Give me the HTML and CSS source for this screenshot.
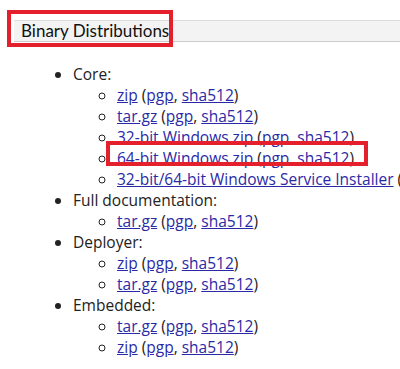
FILE: index.html
```html
<!DOCTYPE html>
<html lang="en">
<head>
    <meta charset="UTF-8">
    <meta name="viewport" content="width=device-width, initial-scale=1.0">
    <title>Binary Distributions</title>
    <link rel="stylesheet" href="styles.css">
</head>
<body>
    <h3 class="section-head"><span class="mark">Binary Distributions</span></h3>
    <ul class="dist">
        <li>Core:
            <ul>
                <li><a href="#">zip</a> (<a href="#">pgp</a>, <a href="#">sha512</a>)</li>
                <li><a href="#">tar.gz</a> (<a href="#">pgp</a>, <a href="#">sha512</a>)</li>
                <li><a href="#">32-bit Windows zip</a> (<a href="#">pgp</a>, <a href="#">sha512</a>)</li>
                <li><span class="mark mark-row"><a href="#">64-bit Windows zip</a> (<a href="#">pgp</a>, <a href="#">sha512</a>)</span></li>
                <li class="nowrap"><a href="#">32-bit/64-bit Windows Service Installer</a> (<a href="#">pgp</a>, <a href="#">sha512</a>)</li>
            </ul>
        </li>
        <li>Full documentation:
            <ul>
                <li><a href="#">tar.gz</a> (<a href="#">pgp</a>, <a href="#">sha512</a>)</li>
            </ul>
        </li>
        <li>Deployer:
            <ul>
                <li><a href="#">zip</a> (<a href="#">pgp</a>, <a href="#">sha512</a>)</li>
                <li><a href="#">tar.gz</a> (<a href="#">pgp</a>, <a href="#">sha512</a>)</li>
            </ul>
        </li>
        <li>Embedded:
            <ul>
                <li><a href="#">tar.gz</a> (<a href="#">pgp</a>, <a href="#">sha512</a>)</li>
                <li><a href="#">zip</a> (<a href="#">pgp</a>, <a href="#">sha512</a>)</li>
            </ul>
        </li>
    </ul>
</body>
</html>
```

FILE: styles.css
```css
* {
    margin: 0;
    padding: 0;
}

html, body {
    overflow: hidden;
}

body {
    font-family: "Open Sans", "Noto Sans", sans-serif;
    font-size: 15.5px;
    color: #222;
    background: #fff;
}

a {
    color: #2a2aa6;
}

.section-head {
    margin: 20px 0 0 14px;
    height: 22px;
    padding-left: 7px;
    background-color: #f3f3f3;
    border-top: 1px solid #ddd;
    border-bottom: 1px solid #ccc;
    box-sizing: border-box;
    font-family: Lato, "Open Sans", sans-serif;
    font-size: 17px;
    font-weight: normal;
    line-height: 20px;
    color: #111;
}

.mark {
    position: relative;
}

.mark::after {
    content: "";
    position: absolute;
    left: -14px;
    top: -10px;
    width: 166px;
    height: 37px;
    border: 4px solid #e3202b;
    box-sizing: border-box;
}

.mark-row::after {
    left: -11px;
    top: -6px;
    width: 262px;
    height: 25px;
}

.dist {
    margin-top: 22px;
    padding-left: 73px;
    line-height: 21px;
}

.dist ul {
    padding-left: 44px;
    list-style-type: circle;
}

.nowrap {
    white-space: nowrap;
}
```
